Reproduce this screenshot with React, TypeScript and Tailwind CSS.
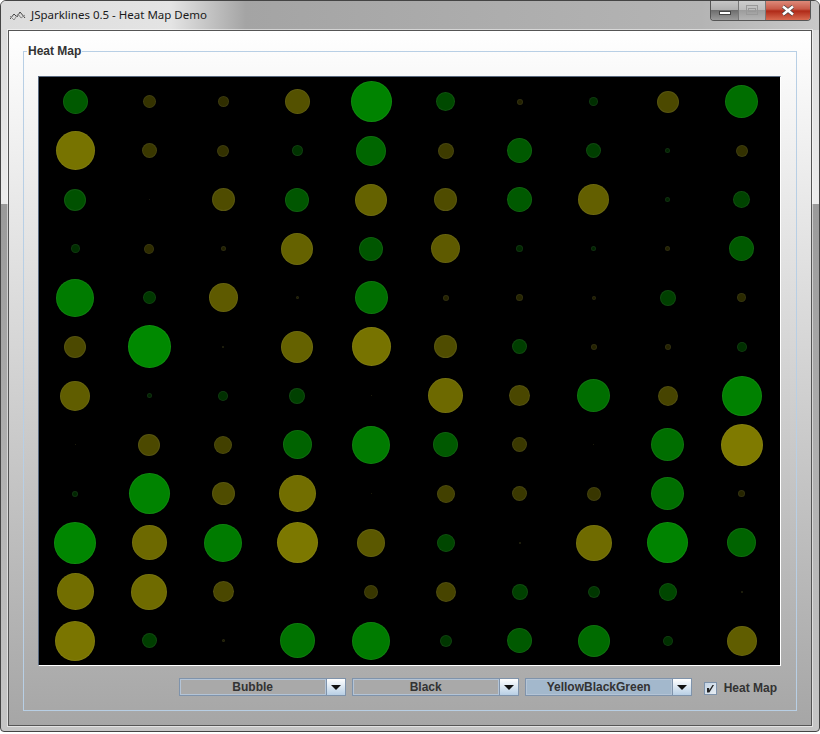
type Bubble = [number, "g" | "y"];

const rows: Bubble[][] = [
  [[25, "g"], [13, "y"], [11, "y"], [25, "y"], [41, "g"], [19, "g"], [6, "y"], [9, "g"], [22, "y"], [33, "g"]],
  [[39, "y"], [15, "y"], [12, "y"], [11, "g"], [30, "g"], [16, "y"], [25, "g"], [15, "g"], [5, "g"], [12, "y"]],
  [[22, "g"], [1, "y"], [23, "y"], [24, "g"], [32, "y"], [23, "y"], [25, "g"], [31, "y"], [5, "g"], [17, "g"]],
  [[9, "g"], [10, "y"], [5, "y"], [32, "y"], [24, "g"], [29, "y"], [7, "g"], [5, "g"], [5, "y"], [25, "g"]],
  [[38, "g"], [13, "g"], [29, "y"], [3, "y"], [33, "g"], [6, "y"], [7, "y"], [4, "y"], [16, "g"], [9, "y"]],
  [[22, "y"], [43, "g"], [2, "y"], [32, "y"], [39, "y"], [23, "y"], [15, "g"], [6, "y"], [6, "y"], [10, "g"]],
  [[30, "y"], [5, "g"], [10, "g"], [16, "g"], [1, "y"], [35, "y"], [21, "y"], [33, "g"], [20, "y"], [40, "g"]],
  [[1, "y"], [22, "y"], [18, "y"], [29, "g"], [38, "g"], [25, "g"], [15, "y"], [1, "y"], [33, "g"], [42, "y"]],
  [[6, "g"], [41, "g"], [23, "y"], [37, "y"], [1, "y"], [18, "y"], [15, "y"], [14, "y"], [33, "g"], [7, "y"]],
  [[42, "g"], [35, "y"], [38, "g"], [41, "y"], [28, "y"], [18, "g"], [2, "y"], [36, "y"], [41, "g"], [29, "g"]],
  [[37, "y"], [36, "y"], [21, "y"], [0, "y"], [14, "y"], [20, "y"], [16, "g"], [12, "g"], [18, "g"], [2, "y"]],
  [[40, "y"], [15, "g"], [3, "y"], [35, "g"], [38, "g"], [12, "g"], [25, "g"], [32, "g"], [10, "g"], [30, "y"]],
];

function bubbleColor(d: number, kind: "g" | "y") {
  const b = 0.15 + (d / 43) * 0.8;
  if (kind === "g") return `rgb(0, ${Math.round(b * 144)}, 0)`;
  return `rgb(${Math.round(b * 136)}, ${Math.round(b * 131)}, 0)`;
}

function Combo({ label, active }: { label: string; active?: boolean }) {
  return (
    <div className="flex h-[18px] w-[167px] border border-[#7f93ab]">
      <div
        className={`flex flex-1 items-center justify-center border border-[#b4c4d6] text-[12px] leading-none font-bold text-[#333] ${active ? "bg-[#a3b8cc]" : "bg-[#a9a9a9]"}`}
      >
        {label}
      </div>
      <div className="flex w-[19px] items-center justify-center border-l border-[#7f93ab] bg-gradient-to-b from-white to-[#b8cfe5]">
        <svg width="10" height="5" viewBox="0 0 10 5">
          <path d="M0 0h10L5 5z" fill="#111" />
        </svg>
      </div>
    </div>
  );
}

export default function App() {
  return (
    <div className="h-[734px] w-[820px] overflow-hidden bg-white font-['Liberation_Sans',sans-serif]">
      <div className="h-[732px] overflow-hidden rounded-t-[6px] rounded-b-[4px] border border-[#444] bg-[linear-gradient(to_bottom,#d8d8d8_0,#ececec_203px,#9a9a9a_203px,#c6c6c6_100%)]">
        <div className="flex h-[29px] items-start bg-[linear-gradient(to_right,#dcdcdc_0,#e4e4e4_170px,#a4a4a4_245px,#b4b4b4_700px,#c8c8c8_100%)] pr-[8px]">
          <svg className="mt-[9px] ml-[9px]" width="16" height="11" viewBox="0 0 16 11" fill="none">
            <path d="M0 9l4-5 3 3 3-5 5 6" stroke="#444" strokeWidth="1" />
            <path d="M0 6l4 4 4-6 3 4 4-3" stroke="#888" strokeWidth="1" />
          </svg>
          <span className="mt-[6px] ml-[5px] font-['Noto_Sans',sans-serif] text-[11.5px] leading-[16px] text-[#1a1a1a]">
            JSparklines 0.5 - Heat Map Demo
          </span>
          <div className="-mt-px ml-auto flex h-[21px] w-[101px] overflow-hidden rounded-b-[4px] border-x border-b border-[#555]">
            <div className="flex w-[28px] items-center justify-center border-r border-[#777] bg-[linear-gradient(to_bottom,#c8c8c8_0,#b0b0b0_50%,#6e6e6e_52%,#9a9a9a_100%)]">
              <div className="mt-[5px] h-[4px] w-[12px] border border-[#444] bg-white" />
            </div>
            <div className="flex w-[27px] items-center justify-center border-r border-[#777] bg-[linear-gradient(to_bottom,#cfcfcf_0,#bcbcbc_50%,#9c9c9c_52%,#b4b4b4_100%)]">
              <div className="flex h-[10px] w-[12px] items-center justify-center border border-[#999]">
                <div className="h-[4px] w-[8px] border border-[#999]" />
              </div>
            </div>
            <div className="flex flex-1 items-center justify-center bg-[linear-gradient(to_bottom,#e09080_0,#c85a48_45%,#b02a18_55%,#d86a50_100%)]">
              <svg width="14" height="11" viewBox="0 0 14 11">
                <path d="M2 1.5l10 8M12 1.5l-10 8" stroke="#444" strokeWidth="4" />
                <path d="M2 1.5l10 8M12 1.5l-10 8" stroke="#fff" strokeWidth="2.6" />
              </svg>
            </div>
          </div>
        </div>

        <div className="mx-[7px] h-[696px] border border-[#555] bg-gradient-to-b from-white to-[#a6a6a6] pt-[13px] pr-[14px] pl-[14px] shadow-[0_0_0_1px_rgba(255,255,255,0.5)]">
          <fieldset className="h-[667px] min-w-0 border border-[#b8cfe5] pl-[14px]">
            <legend className="-ml-[11px] h-[14px] px-px text-[12px] leading-[14px] font-bold text-[#333]">Heat Map</legend>
            <div className="mt-[18px] h-[590px] w-[743px] border border-t-[#5a6a80] border-r-white border-b-white border-l-[#5a6a80] bg-black">
              <div className="-ml-px grid h-[588px] w-[741px] grid-cols-10 grid-rows-12">
                {rows.flatMap((row, r) =>
                  row.map(([d, kind], c) => (
                    <div key={`${r}-${c}`} className="flex items-center justify-center">
                      {d > 0 && (
                        <div
                          className="rounded-full shadow-[inset_0_0_0_1px_rgba(255,255,255,0.06)]"
                          style={{
                            width: d,
                            height: d,
                            backgroundColor: bubbleColor(d, kind),
                          }}
                        />
                      )}
                    </div>
                  )),
                )}
              </div>
            </div>
            <div className="mt-[12px] flex items-center justify-end pr-[19px]">
              <div className="flex gap-[6px]">
                <Combo label="Bubble" />
                <Combo label="Black" />
                <Combo label="YellowBlackGreen" active />
              </div>
              <div className="mt-[2px] ml-[12px] flex h-[13px] w-[13px] items-center justify-center border border-[#7f93ab] bg-gradient-to-br from-[#c4d4e4] to-[#e8eef4]">
                <svg width="9" height="9" viewBox="0 0 9 9">
                  <path d="M1 4h2.2v2.2L6.5 1H8L3.4 8.5H1z" fill="#222" />
                </svg>
              </div>
              <span className="mt-[2px] ml-[7px] text-[12px] leading-none font-bold text-[#333]">Heat Map</span>
            </div>
          </fieldset>
        </div>
      </div>
    </div>
  );
}
